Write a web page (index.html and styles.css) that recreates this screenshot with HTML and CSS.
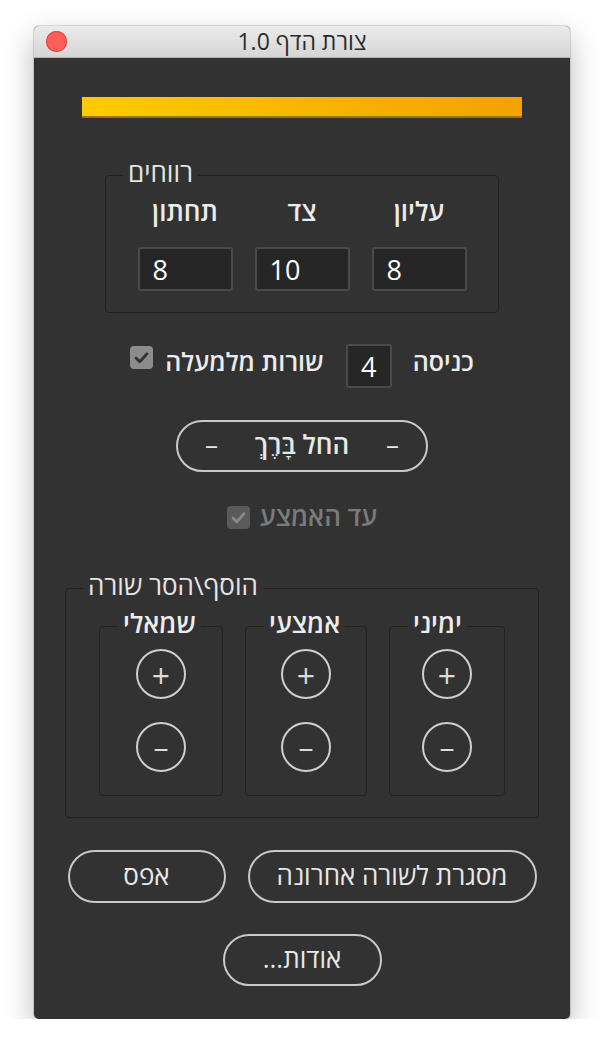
FILE: index.html
```html
<!DOCTYPE html>
<html lang="he">
<head>
<meta charset="utf-8">
<title>צורת הדף 1.0</title>
<link rel="stylesheet" href="styles.css">
</head>
<body>
<div class="window">
  <div class="titlebar">
    <span class="close"></span>
    <span class="title" dir="rtl">צורת הדף 1.0</span>
  </div>
  <div class="content">
    <div class="progress"></div>

    <fieldset class="group margins">
      <legend dir="rtl">רווחים</legend>
      <div class="cols">
        <div class="col"><span class="label" dir="rtl">תחתון</span><input class="field" value="8"></div>
        <div class="col"><span class="label" dir="rtl">צד</span><input class="field" value="10"></div>
        <div class="col"><span class="label" dir="rtl">עליון</span><input class="field" value="8"></div>
      </div>
    </fieldset>

    <div class="indent-row">
      <span class="check"><svg viewBox="0 0 23 23" width="23" height="23"><path d="M6 12 L9.8 15.8 L17 7.8" fill="none" stroke="#333" stroke-width="2.8" stroke-linecap="round" stroke-linejoin="round"/></svg></span>
      <span class="label row-text text-lines" dir="rtl">שורות מלמעלה</span>
      <input class="field small" value="4">
      <span class="label row-text text-indent" dir="rtl">כניסה</span>
    </div>

    <button class="pill apply"><span class="dash">–</span><span dir="rtl">החל בָּרֶךְ</span><span class="dash">–</span></button>

    <div class="half-row">
      <span class="check disabled"><svg viewBox="0 0 23 23" width="23" height="23"><path d="M6 12 L9.8 15.8 L17 7.8" fill="none" stroke="#8a8a8a" stroke-width="2.8" stroke-linecap="round" stroke-linejoin="round"/></svg></span>
      <span class="label muted" dir="rtl">עד האמצע</span>
    </div>

    <fieldset class="group rows">
      <legend dir="rtl">הוסף\הסר שורה</legend>
      <div class="subs">
        <fieldset class="sub left">
          <legend dir="rtl">שמאלי</legend>
          <button class="circle">+</button>
          <button class="circle minus">–</button>
        </fieldset>
        <fieldset class="sub middle">
          <legend dir="rtl">אמצעי</legend>
          <button class="circle">+</button>
          <button class="circle minus">–</button>
        </fieldset>
        <fieldset class="sub right">
          <legend dir="rtl">ימיני</legend>
          <button class="circle">+</button>
          <button class="circle minus">–</button>
        </fieldset>
      </div>
    </fieldset>

    <div class="bottom-row">
      <button class="pill reset" dir="rtl">אפס</button>
      <button class="pill frame" dir="rtl">מסגרת לשורה אחרונה</button>
    </div>
    <button class="pill about" dir="rtl">אודות...</button>
  </div>
</div>
</body>
</html>
```

FILE: styles.css
```css
html, body {
  margin: 0;
  padding: 0;
  background: #ffffff;
}

body {
  font-family: "Open Sans", "DejaVu Sans", sans-serif;
}

.window {
  margin: 26px 0 0 34px;
  width: 536px;
  border-radius: 5px;
  overflow: hidden;
  box-shadow: 0 12px 30px rgba(0, 0, 0, 0.28), 0 0 0 1px rgba(0, 0, 0, 0.12);
  background: #323232;
}

.titlebar {
  height: 31px;
  border-bottom: 1px solid #b3b3b3;
  background: linear-gradient(#ebebeb, #d5d5d5);
  display: flex;
  align-items: center;
  justify-content: center;
  position: relative;
}

.close {
  position: absolute;
  left: 12px;
  top: 5px;
  width: 21px;
  height: 21px;
  border-radius: 50%;
  background: #fe5e57;
  box-shadow: inset 0 0 0 1px #e0443e;
}

.title {
  font-size: 23px;
  line-height: 28px;
  color: #2b2b2b;
  padding-bottom: 2px;
}

.content {
  display: flex;
  flex-direction: column;
  align-items: center;
  padding: 39px 0 33px;
  color: #e8e8e8;
}

.progress {
  align-self: stretch;
  margin: 0 48px;
  height: 19px;
  border-bottom: 2px solid #a07600;
  background: linear-gradient(90deg, #ffcc00, #f8b600 50%, #f3a200);
}

.group {
  margin: 0;
  padding: 0;
  border: 1px solid #222222;
  border-radius: 4px;
  min-width: 0;
  box-sizing: border-box;
}

.group legend,
.sub legend {
  padding: 0 5px 6px;
  margin-left: 17px;
  font-size: 26px;
  line-height: 30px;
  color: #e6e6e6;
}

.margins {
  margin-top: 39px;
  width: 394px;
  padding: 3px 0 21px;
}

.cols {
  display: flex;
  justify-content: center;
  gap: 22px;
}

.col {
  display: flex;
  flex-direction: column;
  align-items: center;
}

.label {
  font-size: 26px;
  line-height: 30px;
  font-weight: 600;
  color: #ececec;
}

.field {
  box-sizing: border-box;
  width: 95px;
  height: 44px;
  margin: 21px 0 0;
  padding: 0 0 0 13px;
  background: #262626;
  border: 2px solid #4a4a4a;
  border-radius: 3px;
  color: #ffffff;
  font-family: "Open Sans", "DejaVu Sans", sans-serif;
  font-size: 27px;
  outline: none;
}

.indent-row {
  margin-top: 31px;
  display: flex;
  align-items: flex-start;
}

.row-text {
  font-size: 25px;
  margin-top: 2px;
}

.check {
  width: 23px;
  height: 23px;
  border-radius: 4px;
  background: #8c8c8c;
  display: block;
  margin-top: 2px;
}

.check svg {
  display: block;
}

.check.disabled {
  background: #5a5a5a;
}

.text-lines {
  margin-left: 12px;
}

.field.small {
  width: 46px;
  margin: 0 0 0 22px;
  padding: 0;
  text-align: center;
}

.text-indent {
  margin-left: 21px;
}

.pill {
  box-sizing: border-box;
  height: 52px;
  border: 2px solid #c9c9c9;
  border-radius: 27px;
  background: transparent;
  color: #e8e8e8;
  font-family: "Open Sans", "DejaVu Sans", sans-serif;
  font-size: 26px;
  line-height: 30px;
  padding: 0 0 4px;
}

.apply {
  margin-top: 32px;
  width: 252px;
  display: flex;
  align-items: center;
  justify-content: space-between;
  padding: 0 27px 4px;
  font-weight: 600;
}

.dash {
  font-weight: 400;
}

.half-row {
  margin-top: 29px;
  display: flex;
  align-items: flex-start;
  gap: 10px;
}

.half-row .check {
  margin-top: 5px;
}

.muted {
  color: #7b7b7b;
}

.rows {
  margin-top: 39px;
  width: 474px;
  padding: 2px 0 21px;
}

.subs {
  display: flex;
  justify-content: center;
  gap: 22px;
}

.sub {
  margin: 0;
  border: 1px solid #222222;
  border-radius: 4px;
  min-width: 0;
  box-sizing: border-box;
  padding: 5px 0 23px;
  display: flex;
  flex-direction: column;
  align-items: center;
  gap: 23px;
}

.sub legend {
  margin-left: 18px;
  font-weight: 600;
  color: #ececec;
}

.sub.left { width: 124px; }
.sub.middle { width: 122px; }
.sub.right { width: 116px; }

.circle {
  box-sizing: border-box;
  width: 50px;
  height: 50px;
  border-radius: 50%;
  border: 2px solid #cfcfcf;
  background: transparent;
  color: #dcdcdc;
  font-family: "Open Sans", "DejaVu Sans", sans-serif;
  font-size: 32px;
  line-height: 30px;
  padding: 4px 0 0;
}

.circle.minus {
  font-size: 30px;
  padding: 0;
}

.bottom-row {
  margin-top: 32px;
  display: flex;
  gap: 22px;
}

.reset {
  width: 158px;
  height: 53px;
}

.frame {
  width: 289px;
  height: 53px;
}

.about {
  margin-top: 31px;
  width: 159px;
}
```
